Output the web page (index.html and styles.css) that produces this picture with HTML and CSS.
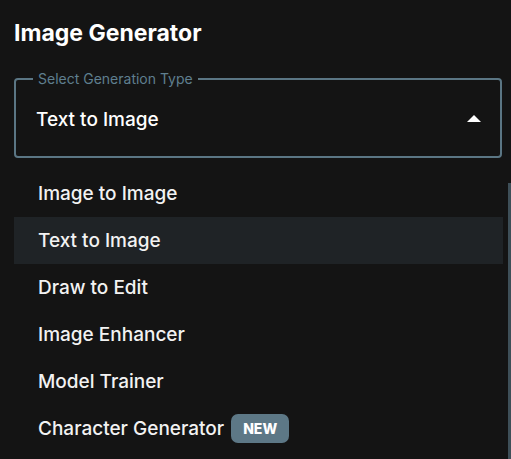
FILE: index.html
```html
<!DOCTYPE html>
<html lang="en">
<head>
    <meta charset="UTF-8">
    <meta name="viewport" content="width=device-width, initial-scale=1.0">
    <title>Image Generator</title>
    <link rel="stylesheet" href="styles.css">
</head>
<body>

    <!-- Заголовок -->
    <h1 class="title">Image Generator</h1>

    <!-- Выбор типа генерации -->
    <fieldset class="select-box">
        <legend>Select Generation Type</legend>
        <div class="select-value">
            <span>Text to Image</span>
            <svg class="arrow" width="14" height="8" viewBox="0 0 14 8">
                <polygon points="0,8 7,1 14,8" fill="#fff"/>
            </svg>
        </div>
    </fieldset>

    <!-- Список вариантов -->
    <ul class="menu">
        <li>Image to Image</li>
        <li class="selected">Text to Image</li>
        <li>Draw to Edit</li>
        <li>Image Enhancer</li>
        <li>Model Trainer</li>
        <li>Character Generator <span class="badge">NEW</span></li>
    </ul>
    <div class="scrollbar"></div>

</body>
</html>
```

FILE: styles.css
```css
body {
    font-family: Inter, "Noto Sans", sans-serif;
    background-color: #141414;
    color: #fff;
    margin: 0;
    padding: 0 14px 0 14px;
    height: 459px;
    overflow: hidden;
    position: relative;
}
.title {
    font-size: 23px;
    font-weight: 700;
    margin: 0;
    padding-top: 19px;
    height: 52px;
    line-height: 28px;
}
.select-box {
    margin: 0;
    width: 488px;
    box-sizing: border-box;
    height: 87px;
    border: 2px solid #5b7684;
    border-radius: 4px;
    padding: 0 18px 0 20px;
}
.select-box legend {
    font-size: 14px;
    color: #5f7f8f;
    padding: 0 5px;
    margin-left: -3px;
    line-height: 16px;
}
.select-value {
    display: flex;
    align-items: center;
    justify-content: space-between;
    height: 68px;
    margin-top: -2px;
    font-size: 19px;
    font-weight: 500;
}
.arrow {
    margin-right: 1px;
    margin-top: -3px;
}
.menu {
    list-style: none;
    margin: 12px 0 0 0;
    padding: 0;
    width: 489px;
}
.menu li {
    height: 47px;
    display: flex;
    align-items: center;
    padding-left: 24px;
    font-size: 19px;
    font-weight: 500;
    color: #f2f2f2;
}
.menu li.selected {
    background-color: #1f2326;
}
.badge {
    background-color: #5d7886;
    color: #fff;
    font-size: 14px;
    font-weight: 800;
    border-radius: 7px;
    padding: 0 12px;
    height: 29px;
    line-height: 29px;
    margin-left: 7px;
}
.scrollbar {
    position: absolute;
    right: 0;
    top: 183px;
    bottom: 0;
    width: 3px;
    background-color: #3e4f58;
}
```
